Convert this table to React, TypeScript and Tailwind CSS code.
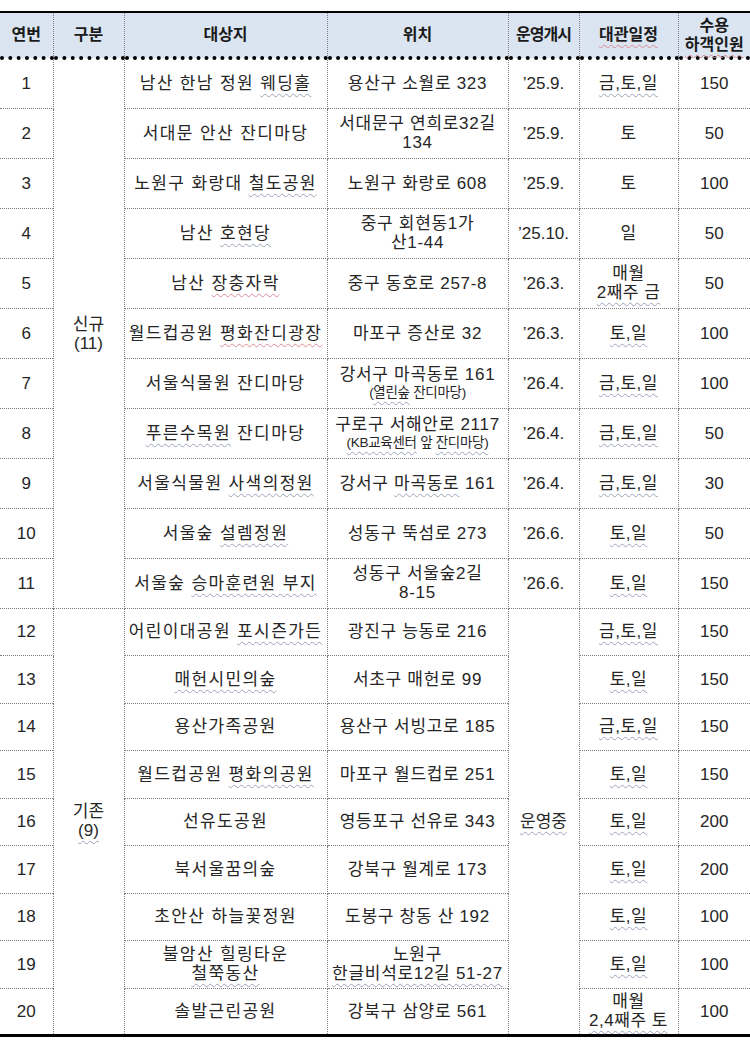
import type { ReactNode } from 'react'

// wavy spell-check underline, as in the original document
function U({ children, red }: { children: ReactNode; red?: boolean }) {
  return (
    <span
      className={
        red
          ? 'underline decoration-wavy decoration-[#d98a96] decoration-1 underline-offset-[4px]'
          : 'underline decoration-wavy decoration-[#9aa3b8] decoration-1 underline-offset-[4px]'
      }
    >
      {children}
    </span>
  )
}

function Small({ children }: { children: ReactNode }) {
  return <span className="block text-[13.5px] leading-[17px] tracking-[-0.3px]">{children}</span>
}

interface Row {
  no: number
  name: ReactNode
  loc: ReactNode
  start?: string
  days: ReactNode
  cap: number
}

const ROWS: Row[] = [
  { no: 1, name: <>남산 한남 정원 <U>웨딩홀</U></>, loc: '용산구 소월로 323', start: '’25.9.', days: <U>금,토,일</U>, cap: 150 },
  { no: 2, name: '서대문 안산 잔디마당', loc: <>서대문구 연희로32길<br />134</>, start: '’25.9.', days: '토', cap: 50 },
  { no: 3, name: <>노원구 화랑대 <U>철도공원</U></>, loc: '노원구 화랑로 608', start: '’25.9.', days: '토', cap: 100 },
  { no: 4, name: <>남산 <U>호현당</U></>, loc: <>중구 회현동1가<br />산1-44</>, start: '’25.10.', days: '일', cap: 50 },
  { no: 5, name: <>남산 <U red>장충자락</U></>, loc: '중구 동호로 257-8', start: '’26.3.', days: <>매월<br /><U>2째주 금</U></>, cap: 50 },
  { no: 6, name: <>월드컵공원 <U red>평화잔디광장</U></>, loc: '마포구 증산로 32', start: '’26.3.', days: <U>토,일</U>, cap: 100 },
  { no: 7, name: '서울식물원 잔디마당', loc: <>강서구 마곡동로 161<Small>(<U>열린숲</U> 잔디마당)</Small></>, start: '’26.4.', days: <U>금,토,일</U>, cap: 100 },
  { no: 8, name: <><U>푸른수목원</U> 잔디마당</>, loc: <>구로구 서해안로 2117<Small><U>(KB교육센터</U> 앞 <U>잔디마당)</U></Small></>, start: '’26.4.', days: <U>금,토,일</U>, cap: 50 },
  { no: 9, name: <>서울식물원 <U>사색의정원</U></>, loc: <>강서구 <U>마곡동로</U> 161</>, start: '’26.4.', days: <U>금,토,일</U>, cap: 30 },
  { no: 10, name: <>서울숲 <U>설렘정원</U></>, loc: '성동구 뚝섬로 273', start: '’26.6.', days: <U>토,일</U>, cap: 50 },
  { no: 11, name: <>서울숲 <U>승마훈련원 부지</U></>, loc: <>성동구 서울숲2길<br />8-15</>, start: '’26.6.', days: <U>토,일</U>, cap: 150 },
  { no: 12, name: <>어린이대공원 <U>포시즌가든</U></>, loc: '광진구 능동로 216', days: <U>금,토,일</U>, cap: 150 },
  { no: 13, name: <U>매헌시민의숲</U>, loc: '서초구 매헌로 99', days: <U>토,일</U>, cap: 150 },
  { no: 14, name: '용산가족공원', loc: '용산구 서빙고로 185', days: <U>금,토,일</U>, cap: 150 },
  { no: 15, name: <>월드컵공원 <U>평화의공원</U></>, loc: '마포구 월드컵로 251', days: <U>토,일</U>, cap: 150 },
  { no: 16, name: '선유도공원', loc: '영등포구 선유로 343', days: <U>토,일</U>, cap: 200 },
  { no: 17, name: '북서울꿈의숲', loc: '강북구 월계로 173', days: <U>토,일</U>, cap: 200 },
  { no: 18, name: '초안산 하늘꽃정원', loc: '도봉구 창동 산 192', days: <U>토,일</U>, cap: 100 },
  { no: 19, name: <>불암산 힐링타운<br /><U>철쭉동산</U></>, loc: <>노원구<br /><U>한글비석로12길 51-27</U></>, days: <U>토,일</U>, cap: 100 },
  { no: 20, name: '솔발근린공원', loc: '강북구 삼양로 561', days: <>매월<br /><U>2,4째주 토</U></>, cap: 100 },
]

const cell = 'border border-dotted border-[#7d7d7d] text-center align-middle p-0 leading-[19px]'
const head = 'border border-dotted border-[#7d7d7d] border-b-[4px] border-b-black border-b-double text-center align-middle p-0 font-bold leading-[19px]'

export default function App() {
  return (
    <div
      className="w-[750px] h-[1045px] bg-white pt-[11px] text-[#262626] text-[17px]"
      style={{ fontFamily: '"Liberation Sans", "Noto Sans CJK KR", sans-serif' }}
    >
      <table className="w-[750px] table-fixed border-collapse border-t-2 border-t-black border-b-[3px] border-b-black">
        <colgroup>
          <col className="w-[53px]" />
          <col className="w-[71px]" />
          <col className="w-[203px]" />
          <col className="w-[181px]" />
          <col className="w-[71px]" />
          <col className="w-[99px]" />
          <col className="w-[72px]" />
        </colgroup>
        <thead>
          <tr className="h-[46px] bg-[#dbe5f1] text-[16px] text-[#1a1a1a]">
            <th className={`${head} border-l-0`}>연번</th>
            <th className={head}>구분</th>
            <th className={head}>대상지</th>
            <th className={head}>위치</th>
            <th className={`${head} tracking-[-1px]`}>운영개시</th>
            <th className={head}><U red>대관일정</U></th>
            <th className={`${head} border-r-0`}>
              수용
              <br />
              <U red>하객인원</U>
            </th>
          </tr>
        </thead>
        <tbody>
          {ROWS.map(r => (
            <tr key={r.no} className={r.no <= 11 ? 'h-[50px]' : 'h-[47.5px]'}>
              <td className={`${cell} border-l-0`}>{r.no}</td>
              {r.no === 1 && (
                <td rowSpan={11} className={cell}>
                  신규
                  <br />
                  (11)
                </td>
              )}
              {r.no === 12 && (
                <td rowSpan={9} className={cell}>
                  기존
                  <br />
                  <U>(9)</U>
                </td>
              )}
              <td className={`${cell} tracking-[1.4px]`}>{r.name}</td>
              <td className={`${cell} tracking-[0.7px]`}>{r.loc}</td>
              {r.start && <td className={cell}>{r.start}</td>}
              {r.no === 12 && (
                <td rowSpan={9} className={cell}>
                  <U>운영중</U>
                </td>
              )}
              <td className={`${cell} tracking-[0.5px]`}>{r.days}</td>
              <td className={`${cell} border-r-0`}>{r.cap}</td>
            </tr>
          ))}
        </tbody>
      </table>
    </div>
  )
}
